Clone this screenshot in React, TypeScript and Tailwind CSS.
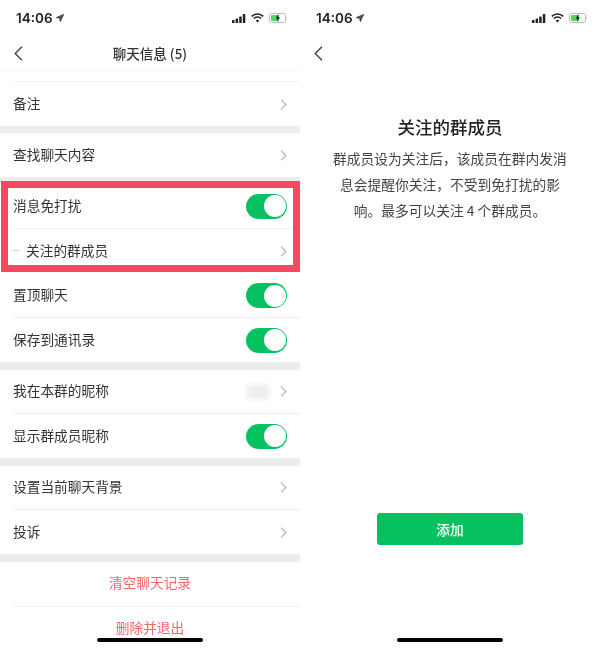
import { ReactNode } from "react";

const font = "font-['Noto_Sans_CJK_SC','Liberation_Sans',sans-serif]";

function StatusBar() {
    return <div className="self-stretch h-[36px] pt-[10px] pl-[16px] pr-[12px] flex justify-between items-start">
        <div className="flex items-center h-[16px] gap-[3px]">
            <span className="font-['Inter',sans-serif] font-semibold text-[13.5px] leading-[16px] text-[#222]">14:06</span>
            <svg width="8" height="8" viewBox="0 0 8 8"><path d="M7.6.4.4 3.6l3.3.7.7 3.3z" fill="#555" stroke="#333" strokeWidth=".8" strokeLinejoin="round" /></svg>
        </div>
        <div className="flex items-center h-[16px] gap-[5px]">
            <svg width="14" height="9" viewBox="0 0 14 9" fill="#222">
                <rect x="0" y="6" width="2.5" height="3" rx=".5" />
                <rect x="3.6" y="4.4" width="2.5" height="4.6" rx=".5" />
                <rect x="7.2" y="2.4" width="2.5" height="6.6" rx=".5" />
                <rect x="10.8" y="0" width="2.5" height="9" rx=".5" />
            </svg>
            <svg width="13" height="10" viewBox="0 0 13 10" fill="none" stroke="#222" strokeWidth="1.6">
                <path d="M.8 3.4a8 8 0 0 1 11.4 0" />
                <path d="M2.8 5.5a5.2 5.2 0 0 1 7.4 0" />
                <path d="M6.5 9.4 4.7 7.5a2.6 2.6 0 0 1 3.6 0z" fill="#222" stroke="none" />
            </svg>
            <svg width="19" height="10" viewBox="0 0 19 10">
                <rect x=".5" y=".5" width="16" height="9" rx="2" fill="#fff" stroke="#bbb" />
                <rect x="2" y="2" width="8" height="6" rx=".8" fill="#4cd964" />
                <path d="M17.5 3.4c.8.3.8 2.9 0 3.2z" fill="#bbb" />
                <path d="M9.6 1 6.6 5.6h2L7.8 9l3.2-4.8H9z" fill="#111" />
            </svg>
        </div>
    </div>
}

function BackIcon() {
    return <svg width="9" height="15" viewBox="0 0 9 15" fill="none" stroke="#444" strokeWidth="1.4"><path d="M8 .7 1.2 7.5 8 14.3" /></svg>
}

function Chevron() {
    return <svg width="7" height="11" viewBox="0 0 7 11" fill="none" stroke="#b8b8b8" strokeWidth="1.2"><path d="M1 .7 6 5.5 1 10.3" /></svg>
}

function Toggle() {
    return <div className="w-[41px] h-[25px] rounded-full bg-[#07c160] p-[1.5px] flex justify-end">
        <div className="w-[22px] h-[22px] rounded-full bg-white" />
    </div>
}

function Band({ h = 7 }: { h?: number }) {
    return <div className={h === 8 ? "h-[8px] bg-[#ededed]" : "h-[7px] bg-[#ededed]"} />
}

interface RowProps {
    label: string,
    right?: ReactNode,
    dash?: boolean,
    line?: boolean,
    height: string
}

function Row({ label, right, dash, line, height }: RowProps) {
    return <div className={`${height} pl-[13px]`}>
        <div className={`h-full pr-[13px] flex items-center justify-between ${line ? "border-b border-[#f1f1f1]" : ""}`}>
            <div className="flex items-center pb-[2px] text-[13.7px] text-[#333]">
                {dash && <span className="w-[6px] h-px bg-[#ccc] mr-[7px]" />}
                {label}
            </div>
            {right}
        </div>
    </div>
}

function HomeBar() {
    return <div className="absolute bottom-[7px] left-[97px] w-[106px] h-[4px] rounded-full bg-black" />
}

function ChatInfo() {
    return <div className="relative w-[300px] h-full">
        <StatusBar />
        <div className="h-[35px] pl-[14px] grid grid-cols-[1fr_auto_1fr] items-center border-b border-[#f7f7f7]">
            <BackIcon />
            <div className="text-[13.5px] font-medium text-[#333] pr-[14px]">聊天信息 (5)</div>
        </div>
        <div className="h-[11px] ml-[13px] border-b border-[#f3f3f3]" />
        <Row height="h-[44px]" label="备注" right={<Chevron />} />
        <Band />
        <Row height="h-[44px]" label="查找聊天内容" right={<Chevron />} />
        <Band />
        <div className="relative">
            <Row height="h-[45px]" label="消息免打扰" right={<Toggle />} line />
            <Row height="h-[45px]" label="关注的群成员" right={<Chevron />} dash />
            <div className="absolute -top-[3px] left-[1px] w-[299px] h-[91px] border-[7px] border-[#f04b60]" />
        </div>
        <Row height="h-[44px]" label="置顶聊天" right={<Toggle />} line />
        <Row height="h-[44px]" label="保存到通讯录" right={<Toggle />} />
        <Band h={8} />
        <Row height="h-[44px]" line label="我在本群的昵称" right={
            <div className="flex items-center gap-[10px]">
                <div className="w-[23px] h-[14px] bg-[#eeeeee] blur-[2px]" />
                <Chevron />
            </div>
        } />
        <Row height="h-[44px]" label="显示群成员昵称" right={<Toggle />} />
        <Band h={8} />
        <Row height="h-[44px]" line label="设置当前聊天背景" right={<Chevron />} />
        <Row height="h-[44px]" label="投诉" right={<Chevron />} />
        <Band h={8} />
        <div className="h-[45px] ml-[13px] pr-[13px] pb-[3px] border-b border-[#f1f1f1] flex items-center justify-center text-[13.7px] text-[#f4686c]">清空聊天记录</div>
        <div className="h-[42px] pb-[2px] flex items-center justify-center text-[13.7px] text-[#f4686c]">删除并退出</div>
        <HomeBar />
    </div>
}

function FollowedMembers() {
    return <div className="relative w-[300px] h-full flex flex-col items-center">
        <StatusBar />
        <div className="self-stretch h-[35px] pl-[14px] flex items-center">
            <BackIcon />
        </div>
        <div className="mt-[43px] text-[17.5px] leading-[26px] font-medium text-[#222]">关注的群成员</div>
        <div className="mt-[5px] w-[240px] text-center text-[13.75px] leading-[26px] text-[#444]">
            群成员设为关注后，该成员在群内发消息会提醒你关注，不受到免打扰的影响。最多可以关注 4 个群成员。
        </div>
        <div className="mt-[290px] w-[146px] h-[32px] rounded-[3px] bg-[#07c160] flex items-center justify-center text-[13.7px] font-medium text-white">添加</div>
        <HomeBar />
    </div>
}

export default function App() {
    return <div className={`${font} w-[600px] h-[649px] overflow-hidden bg-white flex blur-[0.5px]`}>
        <ChatInfo />
        <FollowedMembers />
    </div>
}
